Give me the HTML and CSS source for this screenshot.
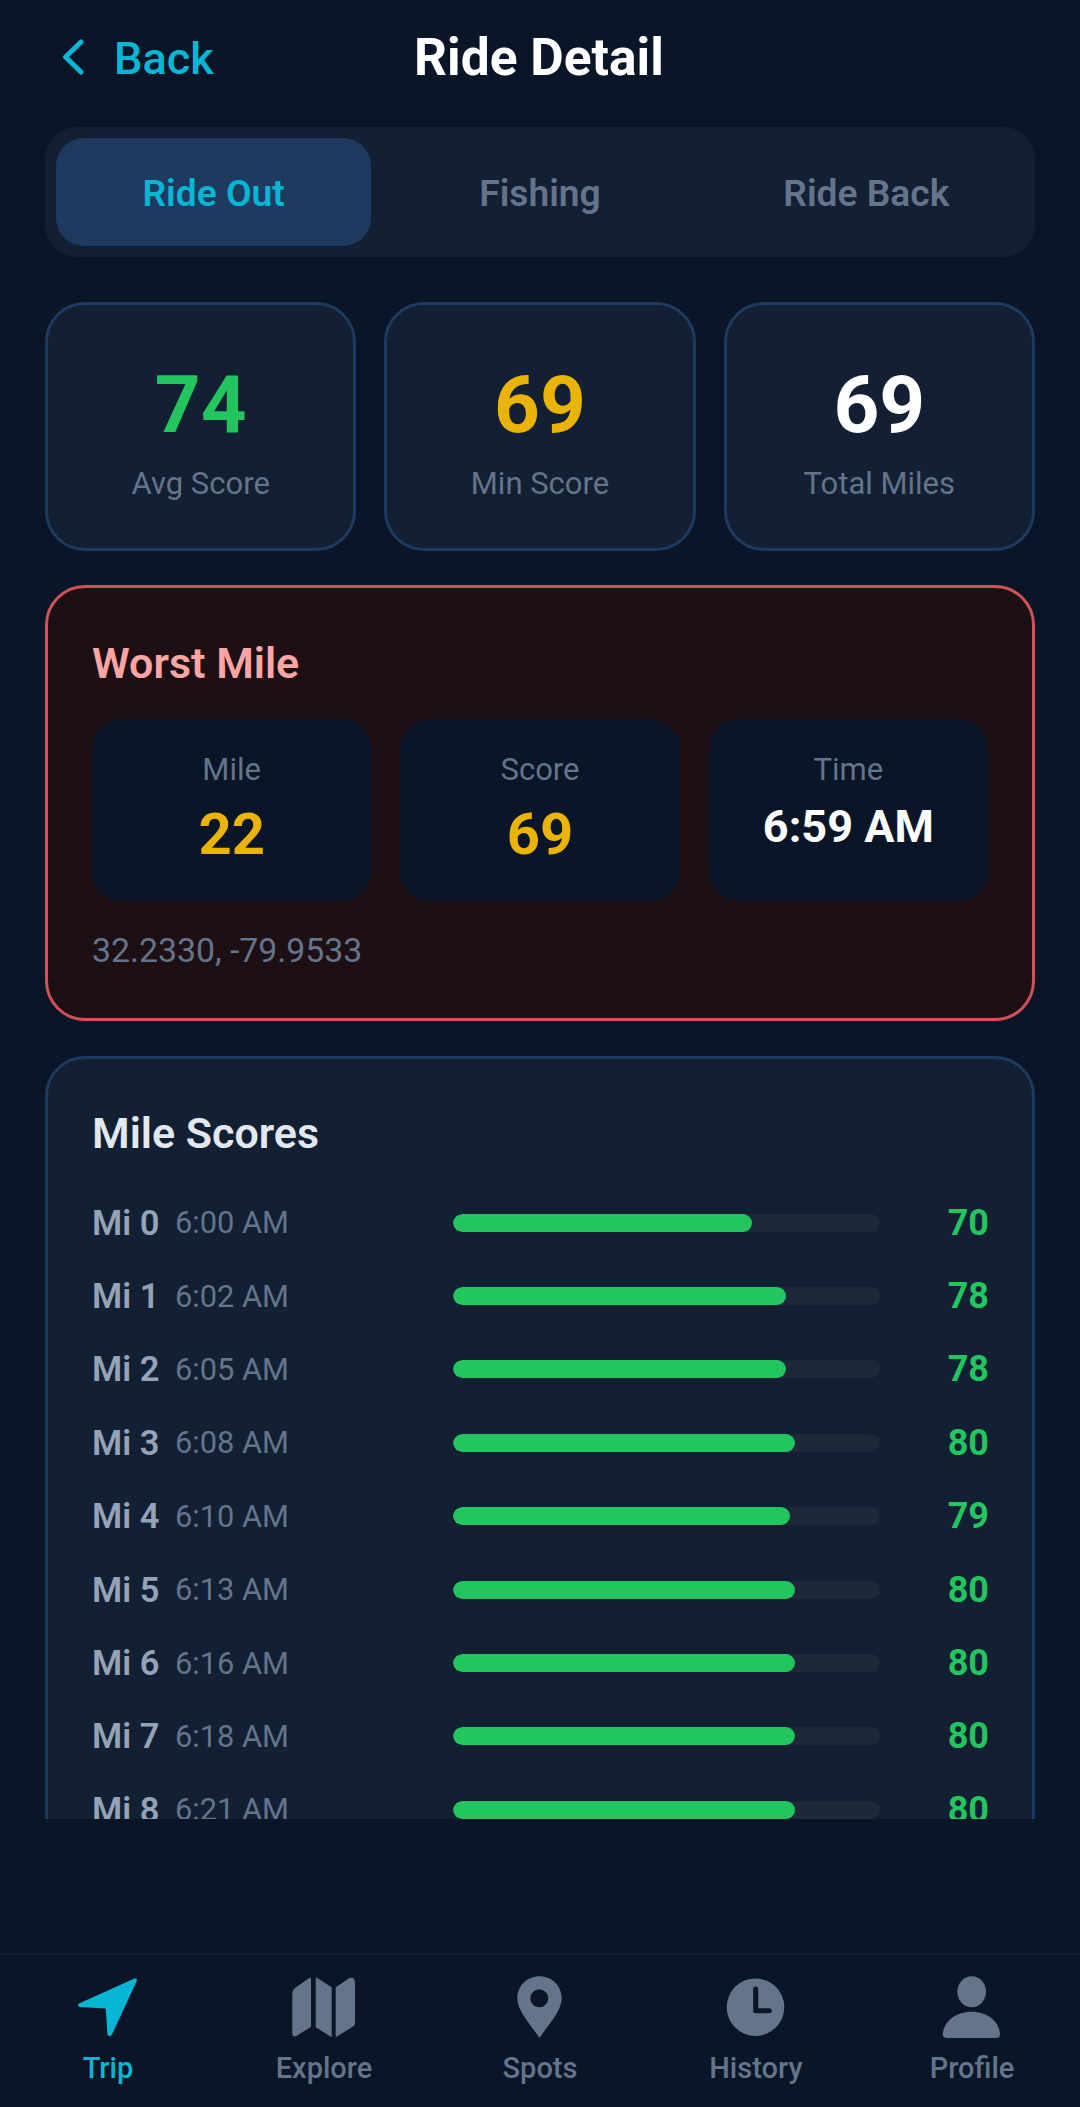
FILE: index.html
```html
<!DOCTYPE html>
<html lang="en">
<head>
  <meta charset="UTF-8">
  <title>Ride Detail</title>
  <link rel="stylesheet" href="styles.css">
</head>
<body>
  <div class="app">
    <header class="top-bar">
      <a class="back-link">
        <svg class="back-icon" viewBox="0 0 24 40"><path d="M20 3 L4.5 18 L20 33" /></svg>
        <span>Back</span>
      </a>
      <h1>Ride Detail</h1>
    </header>

    <div class="tabs">
      <div class="tab active">Ride Out</div>
      <div class="tab">Fishing</div>
      <div class="tab">Ride Back</div>
    </div>

    <div class="stats">
      <div class="stat-card">
        <div class="stat-value green">74</div>
        <div class="stat-label">Avg Score</div>
      </div>
      <div class="stat-card">
        <div class="stat-value yellow">69</div>
        <div class="stat-label">Min Score</div>
      </div>
      <div class="stat-card">
        <div class="stat-value">69</div>
        <div class="stat-label">Total Miles</div>
      </div>
    </div>

    <section class="worst">
      <h2>Worst Mile</h2>
      <div class="worst-grid">
        <div class="worst-cell">
          <div class="worst-label">Mile</div>
          <div class="worst-value yellow">22</div>
        </div>
        <div class="worst-cell">
          <div class="worst-label">Score</div>
          <div class="worst-value yellow">69</div>
        </div>
        <div class="worst-cell">
          <div class="worst-label">Time</div>
          <div class="worst-time">6:59 AM</div>
        </div>
      </div>
      <div class="coords">32.2330, -79.9533</div>
    </section>

    <section class="miles">
      <h2>Mile Scores</h2>
      <div class="mile-row"><span class="mi">Mi 0</span><span class="time">6:00 AM</span><div class="track"><div class="fill" style="width:70%"></div></div><span class="score">70</span></div>
      <div class="mile-row"><span class="mi">Mi 1</span><span class="time">6:02 AM</span><div class="track"><div class="fill" style="width:78%"></div></div><span class="score">78</span></div>
      <div class="mile-row"><span class="mi">Mi 2</span><span class="time">6:05 AM</span><div class="track"><div class="fill" style="width:78%"></div></div><span class="score">78</span></div>
      <div class="mile-row"><span class="mi">Mi 3</span><span class="time">6:08 AM</span><div class="track"><div class="fill" style="width:80%"></div></div><span class="score">80</span></div>
      <div class="mile-row"><span class="mi">Mi 4</span><span class="time">6:10 AM</span><div class="track"><div class="fill" style="width:79%"></div></div><span class="score">79</span></div>
      <div class="mile-row"><span class="mi">Mi 5</span><span class="time">6:13 AM</span><div class="track"><div class="fill" style="width:80%"></div></div><span class="score">80</span></div>
      <div class="mile-row"><span class="mi">Mi 6</span><span class="time">6:16 AM</span><div class="track"><div class="fill" style="width:80%"></div></div><span class="score">80</span></div>
      <div class="mile-row"><span class="mi">Mi 7</span><span class="time">6:18 AM</span><div class="track"><div class="fill" style="width:80%"></div></div><span class="score">80</span></div>
      <div class="mile-row"><span class="mi">Mi 8</span><span class="time">6:21 AM</span><div class="track"><div class="fill" style="width:80%"></div></div><span class="score">80</span></div>
    </section>
  </div>

  <nav class="bottom-nav">
    <div class="nav-item active">
      <svg viewBox="0 0 64 64"><path d="M58.5 3.6 Q61.5 3 60.7 6 L36 59.5 Q33 63 31.5 59.5 L29.7 33.5 L3.5 32 Q1 30 3 28.5 Z" /></svg>
      <span>Trip</span>
    </div>
    <div class="nav-item">
      <svg viewBox="0 0 64 64"><path d="M16.5 3.5 Q19 1.5 19 4.5 V51.7 L4.5 61 Q0.3 62.5 0.3 58 V18 Q0.3 15 3 13 Z M23.7 4 Q23.7 1.5 26 3.5 L39.7 12.3 V62.3 L23.7 52.3 Z M43.7 12.3 L57.5 3 Q63 1.5 63 8 V48 Q63 50 61 51.5 L43.7 62.3 Z" /></svg>
      <span>Explore</span>
    </div>
    <div class="nav-item">
      <svg viewBox="0 0 64 64"><path fill-rule="evenodd" d="M31.5 1.3 C43.5 1.3 53.7 10.5 53.7 23.3 C53.7 36 40 50 31.5 63 C23 50 9.3 36 9.3 23.3 C9.3 10.5 19.5 1.3 31.5 1.3 Z M31.3 14.3 A9 9 0 1 1 31.3 32.3 A9 9 0 1 1 31.3 14.3 Z" /></svg>
      <span>Spots</span>
    </div>
    <div class="nav-item">
      <svg viewBox="0 0 64 64"><circle cx="31.5" cy="32.2" r="28.8" /><path class="clock-hand" d="M31.7 14 V35.7 H45.3" /></svg>
      <span>History</span>
    </div>
    <div class="nav-item">
      <svg viewBox="0 0 64 64"><ellipse cx="31.7" cy="16.8" rx="14.3" ry="15.5" /><path d="M2.7 59 C4 46 16 36.7 31.5 36.7 C47 36.7 59 46 60 59 Q60 63 56 63 H7 Q2.7 63 2.7 59 Z" /></svg>
      <span>Profile</span>
    </div>
  </nav>
</body>
</html>
```

FILE: styles.css
```css
* {
  box-sizing: border-box;
}
html, body {
  margin: 0;
  height: 100%;
}
body {
  display: flex;
  flex-direction: column;
  height: 2107px;
  overflow: hidden;
  background: #0a1628;
  font-family: Roboto, "Liberation Sans", sans-serif;
  color: #fff;
}
.app {
  height: 1820px;
  overflow: hidden;
  padding: 0 45px;
}
.top-bar {
  position: relative;
  height: 127px;
  display: flex;
  align-items: center;
  justify-content: center;
  padding: 0 2px 12px 0;
}
.top-bar h1 {
  margin: 0;
  font-size: 51.5px;
  font-weight: 700;
}
.back-link {
  position: absolute;
  left: 16px;
  top: 32px;
  display: flex;
  align-items: center;
  gap: 29px;
  color: #06b6d4;
  font-size: 45px;
  font-weight: 500;
}
.back-icon {
  width: 24px;
  height: 40px;
}
.back-icon path {
  fill: none;
  stroke: #06b6d4;
  stroke-width: 5;
  stroke-linecap: round;
  stroke-linejoin: round;
}
.tabs {
  display: flex;
  gap: 11px;
  height: 130px;
  padding: 11px;
  background: #131f33;
  border-radius: 32px;
}
.tab {
  flex: 1;
  display: flex;
  align-items: center;
  justify-content: center;
  padding-top: 2px;
  border-radius: 28px;
  font-size: 37.2px;
  font-weight: 600;
  color: #64748b;
}
.tab.active {
  background: #1e3a5f;
  color: #06b6d4;
}
.stats {
  display: flex;
  gap: 28px;
  margin-top: 45px;
}
.stat-card {
  flex: 1;
  height: 249px;
  display: flex;
  flex-direction: column;
  align-items: center;
  padding-top: 54px;
  background: #131f33;
  border: 3px solid #1e3a5f;
  border-radius: 40px;
}
.stat-value {
  font-size: 80px;
  line-height: 92px;
  font-weight: 700;
}
.stat-label {
  margin-top: 14px;
  font-size: 31px;
  color: #64748b;
}
.green {
  color: #22c55e;
}
.yellow {
  color: #eab308;
}
.worst {
  height: 436px;
  margin-top: 34px;
  padding: 51px 44px 0;
  background: #1c1015;
  border: 3px solid #cf5257;
  border-radius: 40px;
}
.worst h2 {
  margin: 0;
  font-size: 43px;
  line-height: 48px;
  font-weight: 600;
  color: #fca5a5;
}
.worst-grid {
  display: flex;
  gap: 29px;
  margin-top: 32px;
}
.worst-cell {
  flex: 1;
  height: 182px;
  padding-top: 33px;
  text-align: center;
  background: #0a1628;
  border-radius: 30px;
}
.worst-label {
  font-size: 31px;
  line-height: 36px;
  color: #64748b;
}
.worst-value {
  font-size: 58px;
  line-height: 70px;
  font-weight: 700;
  margin-top: 11px;
}
.worst-time {
  font-size: 45px;
  line-height: 56px;
  font-weight: 700;
  margin-top: 11px;
}
.coords {
  margin-top: 30px;
  font-size: 33.8px;
  line-height: 40px;
  color: #64748b;
}
.miles {
  margin-top: 35px;
  height: 900px;
  padding: 50px 43px 50px 44px;
  background: #131f33;
  border: 3px solid #1e3a5f;
  border-radius: 40px;
}
.miles h2 {
  margin: 0 0 29px;
  font-size: 43px;
  line-height: 48px;
  font-weight: 600;
  color: #e2e8f0;
}
.mile-row {
  display: flex;
  align-items: center;
  height: 73.4px;
}
.mi {
  width: 83px;
  font-size: 34.5px;
  font-weight: 600;
  color: #94a3b8;
}
.time {
  width: 278px;
  font-size: 30.8px;
  color: #64748b;
}
.track {
  width: 427px;
  height: 18px;
  background: #1e2838;
  border-radius: 9px;
  overflow: hidden;
}
.fill {
  height: 100%;
  background: #22c55e;
  border-radius: 9px;
}
.score {
  flex: 1;
  text-align: right;
  font-size: 36px;
  font-weight: 700;
  color: #22c55e;
}
.bottom-nav {
  display: flex;
  height: 154px;
  margin-top: 134px;
  padding-top: 20px;
  border-top: 2px solid #131f33;
}
.nav-item {
  flex: 1;
  display: flex;
  flex-direction: column;
  align-items: center;
  font-size: 29px;
  font-weight: 500;
  color: #64748b;
}
.nav-item svg {
  width: 64px;
  height: 64px;
  fill: #64748b;
}
.nav-item span {
  margin-top: 12px;
}
.nav-item.active {
  color: #06b6d4;
}
.nav-item.active svg {
  fill: #06b6d4;
}
.clock-hand {
  fill: none;
  stroke: #0a1628;
  stroke-width: 5;
  stroke-linecap: round;
  stroke-linejoin: round;
}
```
